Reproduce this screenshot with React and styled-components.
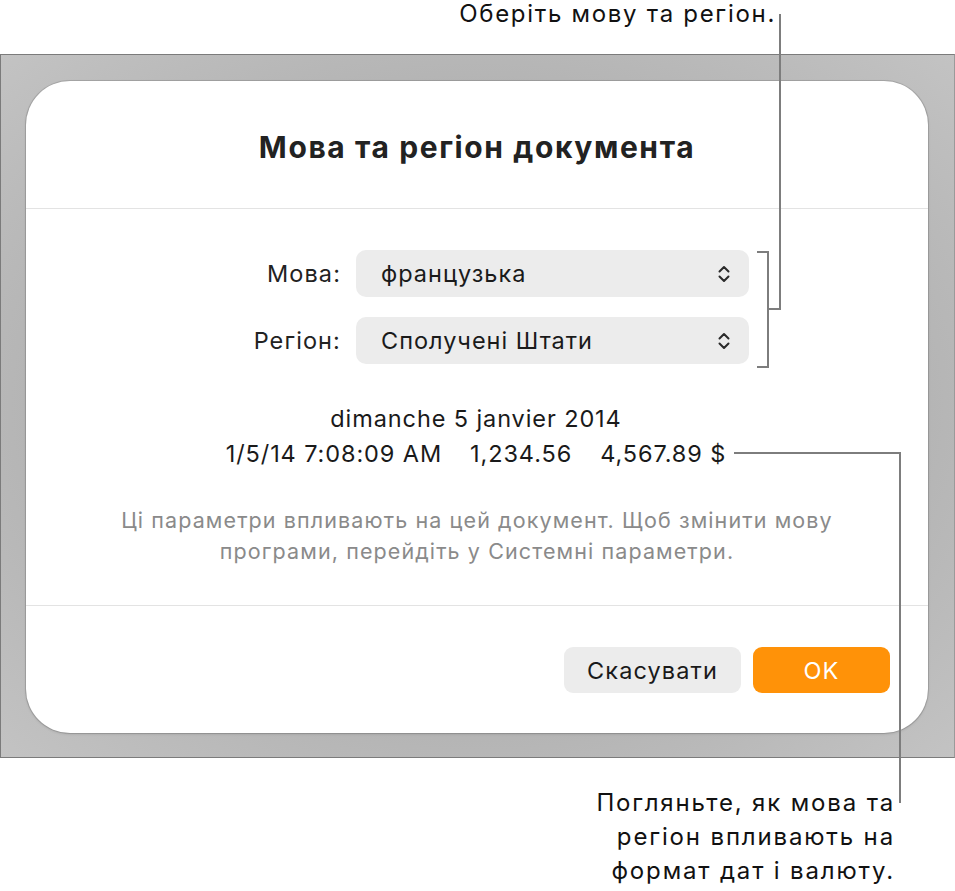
import React from "react";
import styled, { createGlobalStyle } from "styled-components";

const GlobalStyle = createGlobalStyle`
    html, body {
        margin: 0;
        padding: 0;
        background: #ffffff;
    }
    body {
        font-family: Inter, "Noto Sans", "DejaVu Sans", sans-serif;
        color: #1d1d1f;
    }
`;

const Chevrons = () => (
    <svg width="16" height="22" viewBox="0 0 16 22" fill="none">
        <path d="M3.5 8.5 L8 4 L12.5 8.5" stroke="#2a2a2a" strokeWidth="2" strokeLinecap="round" strokeLinejoin="round" />
        <path d="M3.5 13.5 L8 18 L12.5 13.5" stroke="#2a2a2a" strokeWidth="2" strokeLinecap="round" strokeLinejoin="round" />
    </svg>
);

const App = () => {
    return (
        <Page>
            <GlobalStyle />
            <TopNote>
                <CalloutText>Оберіть мову та регіон.</CalloutText>
            </TopNote>
            <Frame>
                <Card>
                    <TitleBlock>
                        <Title>Мова та регіон документа</Title>
                    </TitleBlock>
                    <Body>
                        <Form>
                            <Label>Мова:</Label>
                            <Popup>
                                <span>французька</span>
                                <Chevrons />
                            </Popup>
                            <Label>Регіон:</Label>
                            <Popup>
                                <span>Сполучені Штати</span>
                                <Chevrons />
                            </Popup>
                        </Form>
                        <Sample>
                            <SampleLine>dimanche 5 janvier 2014</SampleLine>
                            <SampleLine>
                                <span>1/5/14 7:08:09 AM</span>
                                <span>1,234.56</span>
                                <span>4,567.89 $</span>
                            </SampleLine>
                        </Sample>
                        <Hint>
                            Ці параметри впливають на цей документ. Щоб змінити мову<br />
                            програми, перейдіть у Системні параметри.
                        </Hint>
                    </Body>
                    <Footer>
                        <Button>Скасувати</Button>
                        <Button $primary>OK</Button>
                    </Footer>
                </Card>
            </Frame>
            <BottomNote>
                <CalloutText $big>
                    Погляньте, як мова та<br />
                    регіон впливають на<br />
                    формат дат і валюту.
                </CalloutText>
            </BottomNote>

            {/* callout: language & region */}
            <Line style={{ left: 779, top: 14, width: 2, height: 296 }} />
            <Line style={{ left: 767, top: 308, width: 14, height: 2 }} />
            <Line style={{ left: 767, top: 251, width: 2, height: 117 }} />
            <Line style={{ left: 757, top: 251, width: 12, height: 2 }} />
            <Line style={{ left: 757, top: 366, width: 12, height: 2 }} />

            {/* callout: formats */}
            <Line style={{ left: 734, top: 452, width: 167, height: 2 }} />
            <Line style={{ left: 899, top: 452, width: 2, height: 351 }} />
        </Page>
    );
};

const Page = styled.div`
    position: relative;
    width: 955px;
    height: 891px;
    overflow: hidden;
`;

const TopNote = styled.div`
    height: 54px;
    display: flex;
    justify-content: flex-end;
    padding-right: 181px;
    box-sizing: border-box;
`;

const CalloutText = styled.div`
    font-size: 24px;
    line-height: ${props => props.$big ? "34px" : "28px"};
    text-align: right;
    color: #111;
    letter-spacing: ${props => props.$big ? "1.85px" : "1.7px"};
    margin-right: -2px;
`;

const Frame = styled.div`
    height: 704px;
    box-sizing: border-box;
    padding: 26px 26px 24px 25px;
    border: 1px solid #7b7b7b;
    border-right-color: #9a9a9a;
    background: radial-gradient(ellipse at center, #acacac 0%, #b2b2b2 60%, #c3c3c3 100%);
`;

const Card = styled.div`
    height: 100%;
    background: #ffffff;
    border-radius: 44px;
    box-shadow: 0 0 0 1px rgba(0, 0, 0, 0.12), 0 1px 3px rgba(0, 0, 0, 0.15);
    display: flex;
    flex-direction: column;
`;

const TitleBlock = styled.div`
    height: 128px;
    display: flex;
    align-items: center;
    justify-content: center;
    border-bottom: 1px solid #e3e3e3;
    padding-top: 4px;
    box-sizing: border-box;
`;

const Title = styled.h1`
    margin: 0;
    font-size: 30px;
    font-weight: 700;
    color: #222;
    letter-spacing: 1.6px;
`;

const Body = styled.div`
    flex: 1;
    border-bottom: 1px solid #e3e3e3;
    padding-top: 41px;
    box-sizing: border-box;
`;

const Form = styled.div`
    display: grid;
    grid-template-columns: 140px 393px;
    column-gap: 15px;
    row-gap: 20px;
    padding-left: 175px;
    align-items: center;
`;

const Label = styled.div`
    text-align: right;
    font-size: 23.5px;
    letter-spacing: 1.1px;
    color: #222;
`;

const Popup = styled.div`
    height: 47px;
    border-radius: 10px;
    background: #ececec;
    display: flex;
    align-items: center;
    justify-content: space-between;
    padding: 0 17px 0 25px;
    font-size: 23.5px;
    letter-spacing: 1px;
    color: #1a1a1a;
    box-sizing: border-box;
`;

const Sample = styled.div`
    margin-top: 37px;
    display: flex;
    flex-direction: column;
    align-items: center;
`;

const SampleLine = styled.div`
    font-size: 23.5px;
    line-height: 35px;
    color: #1a1a1a;
    display: flex;
    gap: 28px;
    letter-spacing: 0.9px;
    padding-right: 2px;
`;

const Hint = styled.p`
    margin: 34px 0 0;
    text-align: center;
    font-size: 21.5px;
    line-height: 31px;
    letter-spacing: 1.1px;
    color: #8a8a8a;
`;

const Footer = styled.div`
    height: 127px;
    display: flex;
    justify-content: flex-end;
    align-items: flex-start;
    gap: 12px;
    padding: 41px 38px 0 0;
    box-sizing: border-box;
`;

const Button = styled.button`
    width: ${props => props.$primary ? "137px" : "177px"};
    height: 46px;
    border: none;
    border-radius: 9px;
    font-family: inherit;
    font-size: 23.5px;
    letter-spacing: 1.1px;
    background: ${props => props.$primary ? "#ff9208" : "#ececec"};
    color: ${props => props.$primary ? "#ffffff" : "#1a1a1a"};
    cursor: pointer;
`;

const BottomNote = styled.div`
    display: flex;
    justify-content: flex-end;
    padding: 28px 62px 0 0;
`;

const Line = styled.div`
    position: absolute;
    background: #7d7d7d;
`;

export default App;
